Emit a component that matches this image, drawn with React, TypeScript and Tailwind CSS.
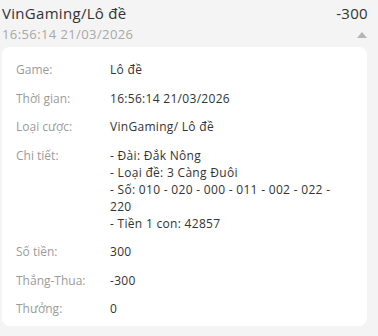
import React from "react";

const rows: { label: string; value: React.ReactNode }[] = [
  { label: "Game:", value: "Lô đề" },
  { label: "Thời gian:", value: "16:56:14 21/03/2026" },
  { label: "Loại cược:", value: "VinGaming/ Lô đề" },
  {
    label: "Chi tiết:",
    value: (
      <>
        <div>- Đài: Đắk Nông</div>
        <div>- Loại đề: 3 Càng Đuôi</div>
        <div>- Số: 010 - 020 - 000 - 011 - 002 - 022 - 220</div>
        <div>- Tiền 1 con: 42857</div>
      </>
    ),
  },
  { label: "Số tiền:", value: "300" },
  { label: "Thắng-Thua:", value: "-300" },
  { label: "Thưởng:", value: "0" },
];

export default function App() {
  return (
    <div
      className="w-[378px] h-[336px] bg-[#f4f4f4] overflow-hidden"
      style={{ fontFamily: "'Open Sans', 'Noto Sans', sans-serif" }}
    >
      <div className="pl-[2px] pr-[10px] pt-[2px]">
        <div className="flex justify-between items-center h-[22px] text-[15px] text-[#333] tracking-[0.3px]">
          <span>VinGaming/Lô đề</span>
          <span>-300</span>
        </div>
        <div className="flex justify-between items-center h-[22px] text-[13px] text-[#a8a8a8] tracking-[0.4px]">
          <span>16:56:14 21/03/2026</span>
          <svg width="10" height="6" viewBox="0 0 10 6" className="mr-[1px]">
            <polygon points="5,0 10,6 0,6" fill="#b5b5b5" />
          </svg>
        </div>
      </div>
      <div className="ml-[2px] mt-[1px] w-[365px] bg-white rounded-[8px] pt-[14px] pb-[9px] px-[14px] flex flex-col gap-[11.5px] text-[12px] leading-[17px] tracking-[0.3px]">
        {rows.map((r) => (
          <div key={r.label} className="flex">
            <div className="w-[94px] shrink-0 text-[#9b9b9b] tracking-[0px]">{r.label}</div>
            <div className="w-[232px] text-[#333]">{r.value}</div>
          </div>
        ))}
      </div>
    </div>
  );
}
